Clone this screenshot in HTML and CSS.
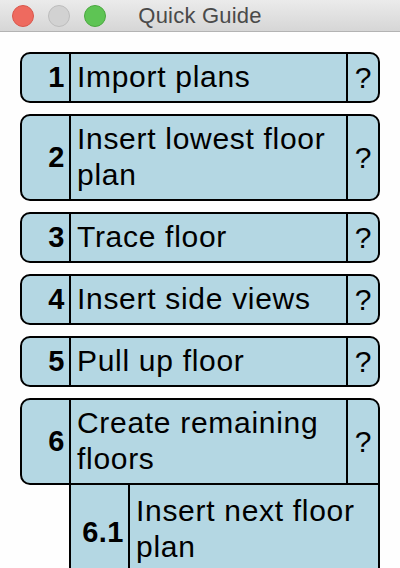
FILE: index.html
```html
<!DOCTYPE html>
<html lang="en">
<head>
<meta charset="utf-8">
<title>Quick Guide</title>
<link rel="stylesheet" href="styles.css">
</head>
<body>
<div class="window">
  <header class="titlebar">
    <div class="lights">
      <span class="light red"></span>
      <span class="light gray"></span>
      <span class="light green"></span>
    </div>
    <div class="title">Quick Guide</div>
  </header>
  <main class="steps">
    <div class="card">
      <div class="num">1</div>
      <div class="label">Import plans</div>
      <div class="help">?</div>
    </div>
    <div class="card">
      <div class="num">2</div>
      <div class="label">Insert lowest floor plan</div>
      <div class="help">?</div>
    </div>
    <div class="card">
      <div class="num">3</div>
      <div class="label">Trace floor</div>
      <div class="help">?</div>
    </div>
    <div class="card">
      <div class="num">4</div>
      <div class="label">Insert side views</div>
      <div class="help">?</div>
    </div>
    <div class="card">
      <div class="num">5</div>
      <div class="label">Pull up floor</div>
      <div class="help">?</div>
    </div>
    <div class="group">
      <div class="card card-parent">
        <div class="num">6</div>
        <div class="label">Create remaining floors</div>
        <div class="help">?</div>
      </div>
      <div class="subcard">
        <div class="num subnum">6.1</div>
        <div class="label sublabel">Insert next floor plan</div>
      </div>
    </div>
  </main>
</div>
</body>
</html>
```

FILE: styles.css
```css
html, body {
  margin: 0;
  padding: 0;
  background: #fefefe;
}

body {
  width: 400px;
  height: 568px;
  overflow: hidden;
  font-family: "Liberation Sans", Arial, sans-serif;
}

.titlebar {
  position: relative;
  height: 31px;
  border-bottom: 1px solid #b3b3b3;
  background: linear-gradient(#ebebeb, #d6d6d6);
  display: flex;
  align-items: center;
  justify-content: center;
}

.lights {
  position: absolute;
  left: 12px;
  top: 5px;
  display: flex;
  gap: 14px;
}

.light {
  width: 22px;
  height: 22px;
  border-radius: 50%;
  box-sizing: border-box;
  border: 1px solid transparent;
}

.red { background: #ee6a5f; border-color: #d9574c; }
.gray { background: #d2d2d2; border-color: #bdbdbd; }
.green { background: #5ec454; border-color: #4aa83f; }

.title {
  font-size: 22px;
  color: #4a4a4a;
  letter-spacing: 0.2px;
}

.steps {
  padding: 20px 20px 0;
  display: flex;
  flex-direction: column;
  gap: 11px;
}

.card {
  display: grid;
  grid-template-columns: 47px 1fr 32px;
  border: 2px solid #000;
  border-radius: 10px;
  background: #b4d7e3;
  color: #000;
}

.num {
  display: flex;
  align-items: center;
  justify-content: flex-end;
  padding-right: 4px;
  font-weight: bold;
  font-size: 29px;
  letter-spacing: 0.5px;
}

.label {
  border-left: 2px solid #000;
  padding: 5px 4px 6px 6px;
  font-size: 30px;
  line-height: 36px;
  letter-spacing: 0.7px;
}

.help {
  border-left: 2px solid #000;
  display: flex;
  align-items: center;
  justify-content: center;
  font-size: 30px;
}

.group {
  display: flex;
  flex-direction: column;
}

.card-parent {
  border-bottom-right-radius: 0;
}

.subcard {
  margin-left: 49px;
  display: grid;
  grid-template-columns: 57px 1fr;
  border: 2px solid #000;
  border-top: none;
  background: #b4d7e3;
}

.sublabel {
  padding: 8px 4px 14px 6px;
}
```
